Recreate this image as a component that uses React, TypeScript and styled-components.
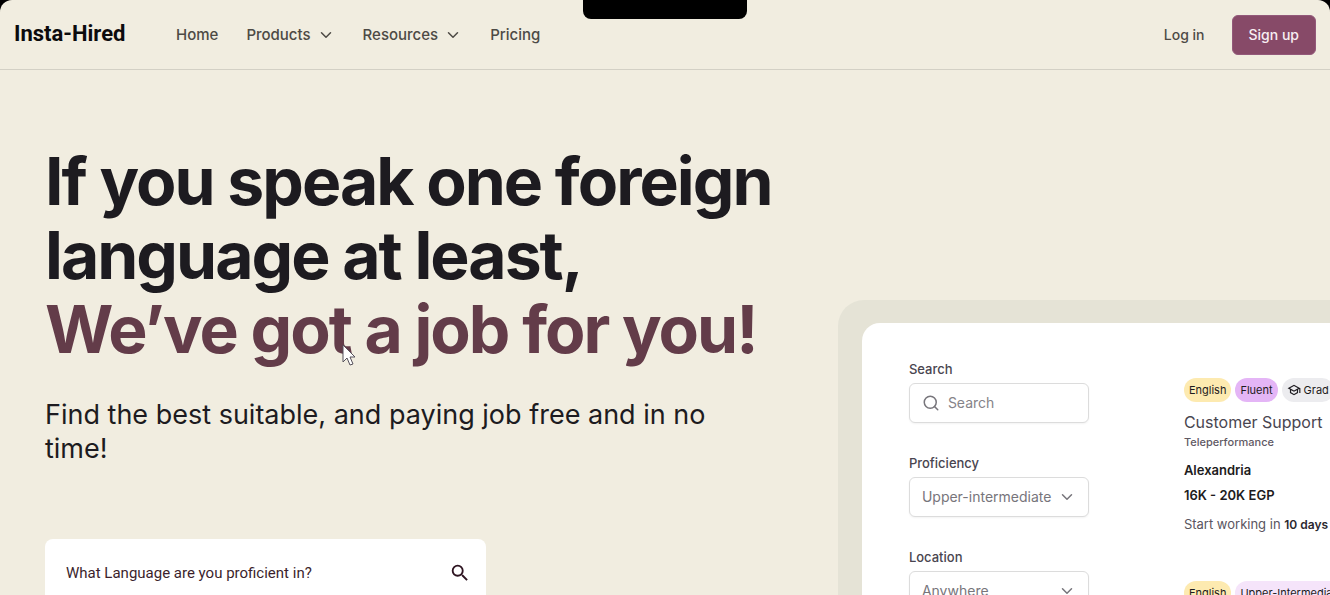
import React from "react";
import styled, { createGlobalStyle, css } from "styled-components";
import { ChevronDown, Search } from "lucide-react";

const GlobalStyle = createGlobalStyle`
  *, *::before, *::after { box-sizing: border-box; }
  body {
    margin: 0;
    background: #000;
    font-family: Inter, "Liberation Sans", sans-serif;
    color: #1d1b20;
  }
  button, input, select { font: inherit; color: inherit; }
  h1, h2, p, ul { margin: 0; padding: 0; }
`;

const Page = styled.div`
  position: relative;
  display: flex;
  flex-direction: column;
  height: 100vh;
  overflow: hidden;
  background: #f1ede0;
  border-radius: 12px 12px 0 0;
`;

const Notch = styled.div`
  position: absolute;
  top: 0;
  left: 50%;
  width: 164px;
  height: 19px;
  transform: translateX(-50%);
  background: #000;
  border-radius: 0 0 8px 8px;
`;

const Header = styled.header`
  display: flex;
  align-items: center;
  flex: none;
  height: 70px;
  padding: 0 14px;
  border-bottom: 1px solid #d3d0c5;
`;

const Brand = styled.a`
  width: 162px;
  padding-bottom: 2px;
  color: #0c0b0d;
  font: 700 22px/26px Roboto, sans-serif;
  text-decoration: none;
`;

const Nav = styled.nav`
  display: flex;
  align-items: center;
  flex: 1;
  gap: 28px;
  font-size: 15px;
`;

const navText = css`
  color: #4d4a45;
  line-height: 20px;
  font-weight: 500;
`;

const NavLink = styled.a`
  ${navText}
  text-decoration: none;
`;

const NavButton = styled.button`
  ${navText}
  display: flex;
  align-items: center;
  gap: 6px;
  padding: 0;
  border: 0;
  background: none;
`;

const Account = styled.div`
  display: flex;
  align-items: center;
  gap: 27px;
  font-size: 14px;
`;

const SignUp = styled.button`
  height: 40px;
  padding: 0 16px;
  border: 1px solid #93597a;
  border-radius: 6px;
  background: #874a68;
  color: #f7eef2;
  font-weight: 500;
`;

const Hero = styled.main`
  display: grid;
  grid-template-columns: 63% 1fr;
  flex: 1;
  min-height: 0;
`;

const Intro = styled.section`
  padding: 74px 40px 0 45px;
`;

const Title = styled.h1`
  font-size: 66px;
  line-height: 74px;
  font-weight: 700;
  letter-spacing: -0.03em;
  white-space: nowrap;
`;

const Accent = styled.span`
  display: block;
  color: #633c49;
`;

const Lead = styled.p`
  max-width: 700px;
  margin-top: 32px;
  font-size: 27px;
  line-height: 34px;
`;

const LanguageSearch = styled.form`
  display: flex;
  align-items: center;
  width: 441px;
  height: 68px;
  margin-top: 73px;
  padding: 0 15px 0 21px;
  border-radius: 8px;
  background: #fff;
`;

const LanguageInput = styled.input`
  flex: 1;
  min-width: 0;
  padding: 0;
  border: 0;
  outline: 0;
  background: none;
  font: 400 15px/20px Roboto, sans-serif;
  &::placeholder { color: #3c1f2c; opacity: 1; }
`;

const IconButton = styled.button`
  display: flex;
  padding: 0;
  border: 0;
  background: none;
  color: #2e1421;
`;

const Preview = styled.section`
  align-self: start;
  width: 900px;
  margin-top: 230px;
  padding: 23px 24px;
  border-radius: 26px;
  background: #e5e3d6;
`;

const Board = styled.div`
  display: flex;
  gap: 95px;
  padding: 38px 47px;
  border-radius: 18px;
  background: #fff;
`;

const Filters = styled.form`
  display: flex;
  flex-direction: column;
  gap: 32px;
  width: 180px;
`;

const Field = styled.div`
  display: flex;
  flex-direction: column;
  gap: 6px;
`;

const Label = styled.label`
  color: #49454f;
  font-size: 13px;
  line-height: 16px;
  font-weight: 500;
`;

const Control = styled.div`
  display: flex;
  align-items: center;
  gap: 8px;
  height: 40px;
  padding: 0 12px;
  border: 1px solid #dcdcdc;
  border-radius: 6px;
  background: #fff;
  box-shadow: 0 1px 2px #0000000d;
  color: #77757b;
`;

const controlText = css`
  flex: 1;
  min-width: 0;
  padding: 0;
  border: 0;
  outline: 0;
  background: none;
  font-size: 14px;
  line-height: 20px;
`;

const TextInput = styled.input`
  ${controlText}
  &::placeholder { color: #858388; opacity: 1; }
`;

const SelectControl = styled(Control)`
  display: grid;
  grid-template-columns: 1fr 18px;
  gap: 0;
  svg { grid-area: 1 / 2; pointer-events: none; }
`;

const Select = styled.select`
  ${controlText}
  grid-area: 1 / 1 / 2 / 3;
  width: 100%;
  appearance: none;
`;

const Jobs = styled.ul`
  display: flex;
  flex-direction: column;
  flex: 1;
  gap: 48px;
  padding-top: 17px;
  list-style: none;
`;

const Job = styled.li`
  display: flex;
  flex-direction: column;
  white-space: nowrap;
`;

const Chips = styled.div`
  display: flex;
  gap: 4px;
`;

const Chip = styled.span<{ $tone: string }>`
  display: flex;
  align-items: center;
  gap: 3px;
  height: 24px;
  padding: 0 5px;
  border-radius: 12px;
  background: ${(p) => p.$tone};
  font-size: 11px;
  line-height: 16px;
`;

const JobTitle = styled.h2`
  margin-top: 8px;
  color: #49454f;
  font-size: 16px;
  line-height: 24px;
  font-weight: 400;
`;

const Company = styled.p`
  color: #5f5964;
  font-size: 11px;
  line-height: 16px;
  font-weight: 500;
`;

const Fact = styled.p`
  margin-top: 9px;
  font-size: 13px;
  line-height: 16px;
  font-weight: 600;
`;

const Details = styled.div`
  margin-top: 12px;
  ${Fact}:first-child { margin-top: 0; }
`;

const Start = styled.p`
  margin-top: 13px;
  color: #5a5560;
  font-size: 13px;
  line-height: 16px;
  strong { color: #2b2830; font-size: 12px; font-weight: 600; }
`;

const Pointer = styled.svg`
  position: absolute;
  top: 344px;
  left: 342px;
`;

const Chevron = () => <ChevronDown size={18} strokeWidth={2} aria-hidden />;

const GradIcon = () => (
  <svg width="14" height="14" viewBox="0 0 24 24" fill="currentColor" aria-hidden>
    <path d="M12 3 1 9l4 2.18v6L12 21l7-3.82v-6l2-1.09V17h2V9L12 3zm6.82 6L12 12.72 5.18 9 12 5.28 18.82 9zM17 16l-5 2.72L7 16v-3.73L12 15l5-2.73V16z" />
  </svg>
);

type JobData = {
  level: string;
  levelTone: string;
};

const jobs: JobData[] = [
  { level: "Fluent", levelTone: "#e4b5f6" },
  { level: "Upper-Intermediate", levelTone: "#f5e4fa" },
];

export default function App() {
  return (
    <>
      <GlobalStyle />
      <Page>
        <Header>
          <Brand href="#">Insta-Hired</Brand>
          <Nav>
            <NavLink href="#">Home</NavLink>
            <NavButton type="button">Products <Chevron /></NavButton>
            <NavButton type="button">Resources <Chevron /></NavButton>
            <NavLink href="#">Pricing</NavLink>
          </Nav>
          <Account>
            <NavLink href="#">Log in</NavLink>
            <SignUp type="button">Sign up</SignUp>
          </Account>
        </Header>
        <Notch />

        <Hero>
          <Intro>
            <Title>
              If you speak one foreign
              <br />
              language at least,
              <Accent>We’ve got a job for you!</Accent>
            </Title>
            <Lead>Find the best suitable, and paying job free and in no time!</Lead>
            <LanguageSearch>
              <LanguageInput
                aria-label="Language"
                placeholder="What Language are you proficient in?"
              />
              <IconButton type="button" aria-label="Search">
                <svg width="22" height="22" viewBox="0 0 24 24" fill="currentColor" aria-hidden>
                  <path d="M15.5 14h-.79l-.28-.27A6.471 6.471 0 0 0 16 9.5 6.5 6.5 0 1 0 9.5 16c1.61 0 3.09-.59 4.23-1.57l.27.28v.79l5 4.99L20.49 19l-4.99-5zm-6 0C7.01 14 5 11.99 5 9.5S7.01 5 9.5 5 14 7.01 14 9.5 11.99 14 9.5 14z" />
                </svg>
              </IconButton>
            </LanguageSearch>
          </Intro>

          <Preview>
            <Board>
              <Filters>
                <Field>
                  <Label htmlFor="search">Search</Label>
                  <Control>
                    <Search size={18} strokeWidth={2} aria-hidden />
                    <TextInput id="search" placeholder="Search" />
                  </Control>
                </Field>
                <Field>
                  <Label htmlFor="proficiency">Proficiency</Label>
                  <SelectControl>
                    <Select id="proficiency">
                      <option>Upper-intermediate</option>
                    </Select>
                    <Chevron />
                  </SelectControl>
                </Field>
                <Field>
                  <Label htmlFor="location">Location</Label>
                  <SelectControl>
                    <Select id="location">
                      <option>Anywhere</option>
                    </Select>
                    <Chevron />
                  </SelectControl>
                </Field>
              </Filters>
              <Jobs>
                {jobs.map((job) => (
                  <Job key={job.level}>
                    <Chips>
                      <Chip $tone="#fdeab0">English</Chip>
                      <Chip $tone={job.levelTone}>{job.level}</Chip>
                      {job.level === "Fluent" && (
                        <Chip $tone="#ececef"><GradIcon />Grad</Chip>
                      )}
                    </Chips>
                    <JobTitle>Customer Support</JobTitle>
                    <Company>Teleperformance</Company>
                    <Details>
                      <Fact>Alexandria</Fact>
                      <Fact>16K - 20K EGP</Fact>
                      <Start>Start working in <strong>10 days</strong></Start>
                    </Details>
                  </Job>
                ))}
              </Jobs>
            </Board>
          </Preview>
        </Hero>
        <Pointer width="14" height="24" viewBox="0 0 14 24" aria-hidden>
          <path
            d="M1 1v17l4-4 3 7 3-1-3-7h5z"
            fill="#fff"
            stroke="#55505a"
            strokeWidth="1"
          />
        </Pointer>
      </Page>
    </>
  );
}
